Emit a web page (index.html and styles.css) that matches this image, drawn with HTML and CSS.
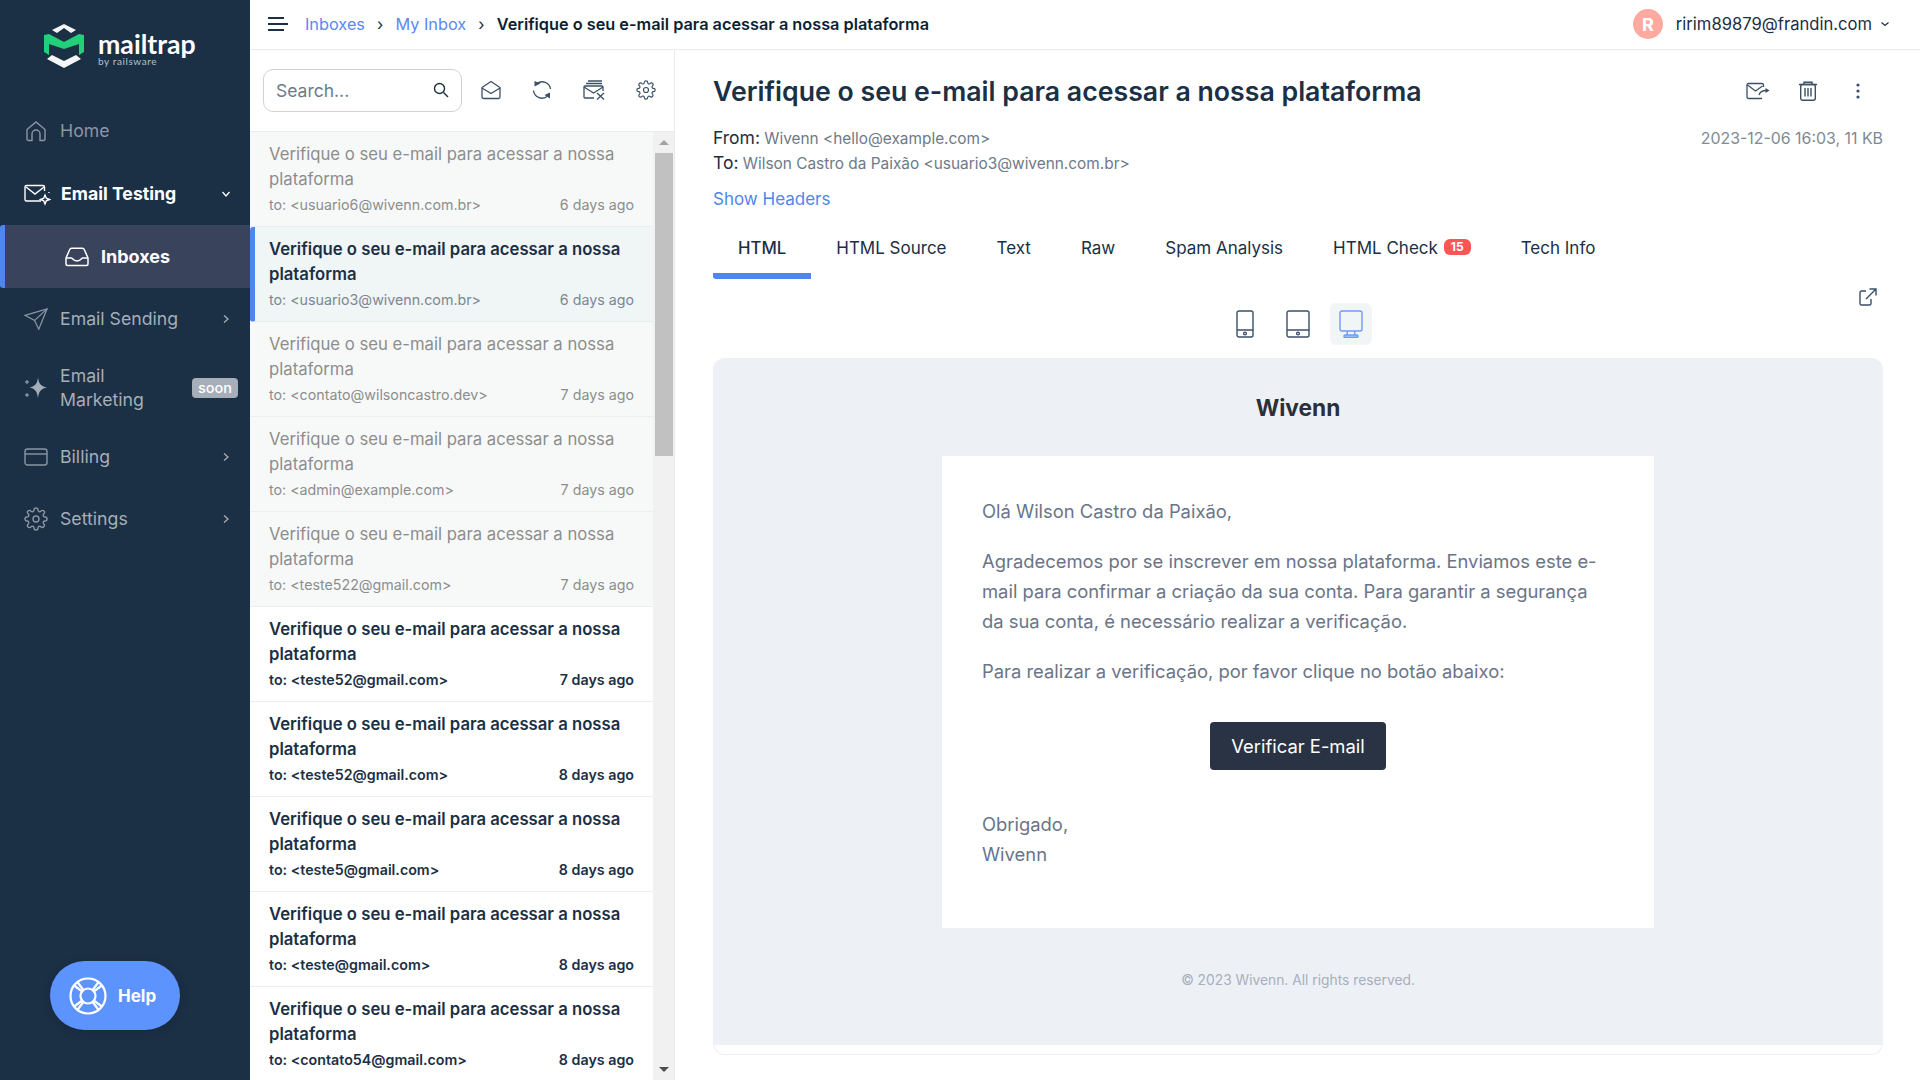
FILE: index.html
```html
<!DOCTYPE html>
<html lang="pt">
<head>
<meta charset="utf-8">
<title>Mailtrap</title>
<link rel="stylesheet" href="styles.css">
</head>
<body>
<div class="app">
  <aside class="sidebar">
    <div class="logo">
      <svg class="logo-mark" width="42" height="46" viewBox="0 0 42 46">
        <path d="M21 1 33 7l-5 3-7-5-7 5-5-3z" fill="#f4f5f6"/>
        <path d="M4 36l5-4 12 6 12-6 5 4-17 9z" fill="#f4f5f6"/>
        <path d="M1 12l5-1 15 8 15-8 5 1v17l-5 3V21l-15 5-15-5v11l-5-3z" fill="#22d07a"/>
      </svg>
      <div class="logo-text">
        <span class="logo-name">mailtrap</span>
        <span class="logo-sub">by railsware</span>
      </div>
    </div>
    <nav class="nav">
      <a class="nav-item home">
        <svg class="nav-icon" width="24" height="24" viewBox="0 0 24 24" fill="none" stroke="#8a96a4" stroke-width="1.400"><path d="M3 10.500 12 3l9 7.500V20a1.500 1.500 0 0 1-1.500 1.500H16V15a4 4 0 0 0-8 0v6.500H4.500A1.500 1.500 0 0 1 3 20z"/></svg>
        <span class="nav-label">Home</span>
      </a>
      <a class="nav-item open">
        <svg class="nav-icon wide" width="28" height="24" viewBox="0 0 28 24" fill="none" stroke="#fff" stroke-width="1.400"><path d="M18 19H3.500A1.500 1.500 0 0 1 2 17.500V5a1.500 1.500 0 0 1 1.500-1.500H20A1.500 1.500 0 0 1 21.500 5v4"/><path d="m3 5 9 7 9-7"/><path d="m22 13 1.300 3.200 3.200 1.300-3.200 1.300L22 22l-1.300-3.200-3.200-1.300 3.200-1.300z"/><path d="M26 10v1"/></svg>
        <span class="nav-label">Email Testing</span>
        <svg class="chev" width="10" height="10" viewBox="0 0 10 10" fill="none" stroke="#fff" stroke-width="1.300"><path d="m1.500 3 3.500 4 3.500-4"/></svg>
      </a>
      <a class="nav-sub">
        <svg width="24" height="20" viewBox="0 0 24 20" fill="none" stroke="#fff" stroke-width="1.500"><path d="M1 11 4.500 3A2.500 2.500 0 0 1 7 1.300h10A2.500 2.500 0 0 1 19.500 3L23 11v6a1.500 1.500 0 0 1-1.500 1.500h-19A1.500 1.500 0 0 1 1 17z"/><path d="M1 11h5.500c1 0 1.500 3 5.500 3s4.500-3 5.500-3H23"/></svg>
        <span>Inboxes</span>
      </a>
      <a class="nav-item">
        <svg class="nav-icon" width="24" height="24" viewBox="0 0 26 24" fill="none" stroke="#8a96a4" stroke-width="1.300"><path d="M1 8 25 1l-9 22-4.500-9.500z"/><path d="M25 1 11.500 13.500"/></svg>
        <span class="nav-label">Email Sending</span>
        <svg class="chev" width="10" height="10" viewBox="0 0 10 10" fill="none" stroke="#a5aeb9" stroke-width="1.300"><path d="m3 1.500 4 3.500-4 3.500"/></svg>
      </a>
      <a class="nav-item tall">
        <svg class="nav-icon" width="24" height="24" viewBox="0 0 24 24" fill="#a5aeb9"><path d="M14 1.500c.8 6 2.500 8.500 9 10-6.500 1.500-8.200 4-9 11-.8-7-2.500-9.500-8.500-11 6-1.500 7.700-4 8.500-10z"/><path d="M3 4v4M1 6h4M3 17v4M1 19h4" stroke="#a5aeb9" stroke-width="1" fill="none"/></svg>
        <span class="nav-label">Email<br>Marketing</span>
        <span class="soon">soon</span>
      </a>
      <a class="nav-item">
        <svg class="nav-icon" width="24" height="20" viewBox="0 0 24 20" fill="none" stroke="#8a96a4" stroke-width="1.400"><rect x="1" y="2" width="22" height="16" rx="2.500"/><path d="M1 7h22"/></svg>
        <span class="nav-label">Billing</span>
        <svg class="chev" width="10" height="10" viewBox="0 0 10 10" fill="none" stroke="#a5aeb9" stroke-width="1.300"><path d="m3 1.500 4 3.500-4 3.500"/></svg>
      </a>
      <a class="nav-item">
        <svg class="nav-icon" width="24" height="24" viewBox="0 0 24 24" fill="none" stroke="#8a96a4" stroke-width="1.400"><circle cx="12" cy="12" r="3"/><path d="M19.400 15a1.700 1.700 0 0 0 .3 1.800l.1.100a2 2 0 1 1-2.900 2.900l-.1-.1a1.700 1.700 0 0 0-2.800 1.200V21a2 2 0 1 1-4 0v-.1a1.700 1.700 0 0 0-2.900-1.200l-.1.100a2 2 0 1 1-2.800-2.800l.1-.1a1.700 1.700 0 0 0-1.200-2.900H3a2 2 0 1 1 0-4h.1a1.700 1.700 0 0 0 1.200-2.900l-.1-.1a2 2 0 1 1 2.800-2.800l.1.100a1.700 1.700 0 0 0 1.900.3 1.700 1.700 0 0 0 1-1.500V3a2 2 0 1 1 4 0v.1a1.700 1.700 0 0 0 2.900 1.200l.1-.1a2 2 0 1 1 2.800 2.800l-.1.100a1.700 1.700 0 0 0 1.200 2.900h.1a2 2 0 1 1 0 4h-.1a1.700 1.700 0 0 0-1.600 1z"/></svg>
        <span class="nav-label">Settings</span>
        <svg class="chev" width="10" height="10" viewBox="0 0 10 10" fill="none" stroke="#a5aeb9" stroke-width="1.300"><path d="m3 1.500 4 3.500-4 3.500"/></svg>
      </a>
    </nav>
    <a class="help">
      <svg width="38" height="38" viewBox="0 0 38 38" fill="none" stroke="#fff" stroke-width="2.200"><circle cx="19" cy="19" r="17.500"/><circle cx="19" cy="19" r="7.500"/><path d="m8 4.500 6 8M4.500 8l8 6M30 4.500l-6 8M33.500 8l-8 6M8 33.500l6-8M4.500 30l8-6M30 33.500l-6-8M33.500 30l-8-6"/></svg>
      <span>Help</span>
    </a>
  </aside>

  <div class="main">
    <header class="topbar">
      <svg class="burger" width="20" height="16" viewBox="0 0 20 16" fill="none" stroke="#1b2f45" stroke-width="2"><path d="M0 2h16M0 8h20M0 14h16"/></svg>
      <nav class="crumbs">
        <a class="crumb">Inboxes</a><span class="sep">›</span>
        <a class="crumb">My Inbox</a><span class="sep">›</span>
        <b class="crumb-now">Verifique o seu e-mail para acessar a nossa plataforma</b>
      </nav>
      <div class="user">
        <span class="avatar">R</span>
        <span class="user-mail">ririm89879@frandin.com</span>
        <svg width="10" height="10" viewBox="0 0 10 10" fill="none" stroke="#1b2f45" stroke-width="1.200"><path d="m1.500 3.500 3.500 3 3.500-3"/></svg>
      </div>
    </header>

    <div class="content">
      <section class="list-col">
        <div class="list-tools">
          <div class="search">
            <span class="search-text">Search...</span>
            <svg width="16" height="16" viewBox="0 0 16 16" fill="none" stroke="#1b2f45" stroke-width="1.400"><circle cx="6.500" cy="6.500" r="5"/><path d="m10.500 10.500 4.500 4.500"/></svg>
          </div>
          <div class="tools">
            <svg width="20" height="20" viewBox="0 0 20 20" fill="none" stroke="#3b5068" stroke-width="1.300"><path d="M1 7.500 10 1.500l9 6V17a1.500 1.500 0 0 1-1.500 1.500h-15A1.500 1.500 0 0 1 1 17z"/><path d="m1 8 9 5.500L19 8"/></svg>
            <svg width="20" height="20" viewBox="0 0 20 20" fill="none" stroke="#3b5068" stroke-width="1.300"><path d="M5 3.500A8.500 8.500 0 0 1 18.500 9"/><path d="M1.500 10.500A8.500 8.500 0 0 0 15 16.500"/><path d="M2.500 1l6 2.500-6 3z" fill="#3b5068" stroke="none"/><path d="M18 18.500 12.500 15l5.500-2.500z" fill="#3b5068" stroke="none"/></svg>
            <svg width="22" height="20" viewBox="0 0 22 20" fill="none" stroke="#3b5068" stroke-width="1.300"><path d="M11 18H2a1 1 0 0 1-1-1V7a1 1 0 0 1 1-1h17a1 1 0 0 1 1 1v4"/><path d="m1 7 9.500 6L20 7"/><path d="M3 3.500h16M5 1h14"/><path d="m14 13 7 6.500M21 13l-7 6.500"/></svg>
            <svg width="20" height="20" viewBox="0 0 24 24" fill="none" stroke="#3b5068" stroke-width="1.400"><circle cx="12" cy="12" r="3"/><path d="M19.400 15a1.700 1.700 0 0 0 .3 1.800l.1.100a2 2 0 1 1-2.900 2.900l-.1-.1a1.700 1.700 0 0 0-2.800 1.200V21a2 2 0 1 1-4 0v-.1a1.700 1.700 0 0 0-2.900-1.200l-.1.100a2 2 0 1 1-2.800-2.800l.1-.1a1.700 1.700 0 0 0-1.200-2.900H3a2 2 0 1 1 0-4h.1a1.700 1.700 0 0 0 1.200-2.900l-.1-.1a2 2 0 1 1 2.800-2.800l.1.100a1.700 1.700 0 0 0 1.900.3 1.700 1.700 0 0 0 1-1.500V3a2 2 0 1 1 4 0v.1a1.700 1.700 0 0 0 2.900 1.200l.1-.1a2 2 0 1 1 2.800 2.800l-.1.100a1.700 1.700 0 0 0 1.200 2.900h.1a2 2 0 1 1 0 4h-.1a1.700 1.700 0 0 0-1.600 1z"/></svg>
          </div>
        </div>
        <div class="list-wrap">
          <ul class="list">
            <li class="row read"><p class="row-title">Verifique o seu e-mail para acessar a nossa plataforma</p><div class="row-meta"><span>to: &lt;usuario6@wivenn.com.br&gt;</span><span>6 days ago</span></div></li>
            <li class="row selected"><p class="row-title">Verifique o seu e-mail para acessar a nossa plataforma</p><div class="row-meta"><span>to: &lt;usuario3@wivenn.com.br&gt;</span><span>6 days ago</span></div></li>
            <li class="row read"><p class="row-title">Verifique o seu e-mail para acessar a nossa plataforma</p><div class="row-meta"><span>to: &lt;contato@wilsoncastro.dev&gt;</span><span>7 days ago</span></div></li>
            <li class="row read"><p class="row-title">Verifique o seu e-mail para acessar a nossa plataforma</p><div class="row-meta"><span>to: &lt;admin@example.com&gt;</span><span>7 days ago</span></div></li>
            <li class="row read"><p class="row-title">Verifique o seu e-mail para acessar a nossa plataforma</p><div class="row-meta"><span>to: &lt;teste522@gmail.com&gt;</span><span>7 days ago</span></div></li>
            <li class="row"><p class="row-title">Verifique o seu e-mail para acessar a nossa plataforma</p><div class="row-meta"><span>to: &lt;teste52@gmail.com&gt;</span><span>7 days ago</span></div></li>
            <li class="row"><p class="row-title">Verifique o seu e-mail para acessar a nossa plataforma</p><div class="row-meta"><span>to: &lt;teste52@gmail.com&gt;</span><span>8 days ago</span></div></li>
            <li class="row"><p class="row-title">Verifique o seu e-mail para acessar a nossa plataforma</p><div class="row-meta"><span>to: &lt;teste5@gmail.com&gt;</span><span>8 days ago</span></div></li>
            <li class="row"><p class="row-title">Verifique o seu e-mail para acessar a nossa plataforma</p><div class="row-meta"><span>to: &lt;teste@gmail.com&gt;</span><span>8 days ago</span></div></li>
            <li class="row"><p class="row-title">Verifique o seu e-mail para acessar a nossa plataforma</p><div class="row-meta"><span>to: &lt;contato54@gmail.com&gt;</span><span>8 days ago</span></div></li>
          </ul>
          <div class="scrollbar">
            <span class="arrow up"></span>
            <div class="track"><div class="thumb"></div></div>
            <span class="arrow down"></span>
          </div>
        </div>
      </section>

      <section class="detail">
        <div class="detail-head">
          <h1 class="subject">Verifique o seu e-mail para acessar a nossa plataforma</h1>
          <div class="head-actions">
            <svg width="24" height="18" viewBox="0 0 24 18" fill="none" stroke="#3b5068" stroke-width="1.300"><path d="M16 16.500H2.500A1.500 1.500 0 0 1 1 15V3a1.500 1.500 0 0 1 1.500-1.500H16A1.500 1.500 0 0 1 17.500 3v2"/><path d="m1.500 3 8 6 7-5"/><path d="M13 13c1-3 3-4.500 7-4.500"/><path d="m19.500 6 4 2.500-4 2.500z" fill="#3b5068" stroke="none"/></svg>
            <svg width="18" height="20" viewBox="0 0 18 20" fill="none" stroke="#3b5068" stroke-width="1.400"><path d="M0 3.500h18M5 3V1.200h8V3"/><rect x="1.700" y="3.500" width="14.600" height="15.800" rx="2"/><path d="M6 7v8.500M9 7v8.500M12 7v8.500"/></svg>
            <svg class="dots" width="4" height="16" viewBox="0 0 4 16" fill="#3b5068"><circle cx="2" cy="2" r="1.600"/><circle cx="2" cy="8" r="1.600"/><circle cx="2" cy="14" r="1.600"/></svg>
          </div>
        </div>
        <div class="addr-wrap">
          <div class="addr">
            <div><span class="addr-key">From:</span> Wivenn &lt;hello@example.com&gt;</div>
            <div><span class="addr-key">To:</span> Wilson Castro da Paixão &lt;usuario3@wivenn.com.br&gt;</div>
          </div>
          <span class="stamp">2023-12-06 16:03, 11 KB</span>
        </div>
        <a class="show-headers">Show Headers</a>
        <div class="tabs">
          <a class="tab active">HTML</a>
          <a class="tab">HTML Source</a>
          <a class="tab">Text</a>
          <a class="tab">Raw</a>
          <a class="tab">Spam Analysis</a>
          <a class="tab">HTML Check <span class="badge">15</span></a>
          <a class="tab">Tech Info</a>
        </div>
        <div class="devices">
          <span class="device"><svg width="18" height="28" viewBox="0 0 18 28" fill="none" stroke="#3b5068" stroke-width="1.400"><rect x="1" y="1" width="16" height="26" rx="2"/><path d="M1 20h16" stroke-width="1.500"/><circle cx="9" cy="23.500" r="1.400"/></svg></span>
          <span class="device"><svg width="24" height="28" viewBox="0 0 24 28" fill="none" stroke="#3b5068" stroke-width="1.400"><rect x="1" y="1" width="22" height="26" rx="2"/><path d="M1 20h22" stroke-width="1.500"/><circle cx="12" cy="23.500" r="1.400"/></svg></span>
          <span class="device current"><svg width="24" height="28" viewBox="0 0 24 28" fill="none" stroke="#6f9bf5" stroke-width="1.400"><rect x="1" y="1" width="22" height="20" rx="2"/><path d="M8.500 21 8 25M15.500 21l.5 4"/><rect x="5" y="25" width="14" height="2.500" rx="1" fill="#a8c3f8"/></svg></span>
          <svg class="external" width="18" height="18" viewBox="0 0 18 18" fill="none" stroke="#3b5068" stroke-width="1.400"><path d="M7 3H2.500A1.500 1.500 0 0 0 1 4.500v11A1.500 1.500 0 0 0 2.500 17h8a1.500 1.500 0 0 0 1.500-1.500V11"/><path d="M7 11 16.500 1.500M10.500 1h6.500v6.500"/></svg>
        </div>
        <div class="preview-frame">
          <div class="preview">
            <h2 class="brand">Wivenn</h2>
            <div class="mail-card">
              <p>Olá Wilson Castro da Paixão,</p>
              <p>Agradecemos por se inscrever em nossa plataforma. Enviamos este e-mail para confirmar a criação da sua conta. Para garantir a segurança da sua conta, é necessário realizar a verificação.</p>
              <p>Para realizar a verificação, por favor clique no botão abaixo:</p>
              <a class="verify">Verificar E-mail</a>
              <p class="thanks">Obrigado,<br>Wivenn</p>
            </div>
            <p class="copyright">© 2023 Wivenn. All rights reserved.</p>
          </div>
        </div>
      </section>
    </div>
  </div>
</div>
</body>
</html>
```

FILE: styles.css
```css
* { box-sizing: border-box; }
html, body { margin: 0; height: 100%; overflow: hidden; }
body { font-family: Inter, "Noto Sans", sans-serif; color: #1b2f45; background: #fff; }
p, h1, h2, ul { margin: 0; padding: 0; }
ul { list-style: none; }

.app { display: flex; height: 1080px; }

/* sidebar */
.sidebar { width: 250px; flex: none; background: #1b2f45; display: flex; flex-direction: column; }
.logo { height: 100px; flex: none; display: flex; align-items: flex-start; gap: 13px; padding: 23px 0 0 43px; }
.logo-text { display: flex; flex-direction: column; padding-top: 10px; }
.logo-name { font-family: Lato, sans-serif; font-size: 26.700px; line-height: 22px; color: #fff; font-weight: 700; }
.logo-sub { font-family: Lato, sans-serif; font-size: 10px; line-height: 12px; color: #b9c0c8; letter-spacing: .6px; }
.nav { display: flex; flex-direction: column; }
.nav-item { height: 62px; display: flex; align-items: center; padding: 0 19px 0 24px; color: #a5aeb9; font-size: 17.700px; line-height: 24px; }
.nav-item.open { height: 63px; color: #fff; font-weight: 700; padding-left: 23px; }
.nav-item.tall { height: 76px; }
.nav-icon { flex: none; margin-right: 12px; }
.nav-icon.wide { margin-right: 10px; }
.nav-label { flex: 1; }
.nav-item.home .nav-label { color: #8a96a4; }
.chev { flex: none; }
.nav-sub { height: 63px; background: #39435b; border-left: 5px solid #4f86ee; border-radius: 3px 0 0 3px; display: flex; align-items: center; gap: 12px; padding-left: 60px; color: #fff; font-weight: 700; font-size: 18px; }
.soon { background: #a5aeb9; color: #fff; font-size: 14.500px; font-weight: 500; line-height: 20px; padding: 0 6px; border-radius: 4px; margin-right: -7px; }
.help { margin: auto 0 50px 50px; width: 130px; height: 69px; border-radius: 35px; background: #5c93fd; box-shadow: 0 2px 10px rgba(0,0,0,.15); display: flex; align-items: center; gap: 11px; padding-left: 19px; color: #fff; font-weight: 700; font-size: 17px; }

/* top bar */
.main { flex: 1; min-width: 0; display: flex; flex-direction: column; }
.topbar { height: 50px; flex: none; border-bottom: 1px solid #e9ebec; display: flex; align-items: center; padding: 0 30px 1px 18px; }
.burger { flex: none; margin-right: 17px; }
.crumbs { display: flex; align-items: center; font-size: 16.300px; flex: 1; }
.crumb { color: #5c88f0; }
.sep { width: 30.500px; text-align: center; color: #1b2f45; }
.crumb-now { font-weight: 600; color: #0d1f33; }
.user { display: flex; align-items: center; }
.avatar { width: 30px; height: 30px; border-radius: 50%; background: #ffaaa1; color: #fff; font-weight: 700; font-size: 18px; display: flex; align-items: center; justify-content: center; margin-right: 13px; }
.user-mail { font-size: 16.600px; color: #1b2f45; margin-right: 8px; }

/* message list */
.content { flex: 1; display: flex; min-height: 0; }
.list-col { width: 425px; flex: none; border-right: 1px solid #e9ebec; display: flex; flex-direction: column; min-height: 0; }
.list-tools { height: 82px; flex: none; display: flex; align-items: center; padding: 0 18px 1px 13px; border-bottom: 1px solid #e9ebec; }
.search { width: 199px; height: 43px; border: 1px solid #cfd2d4; border-radius: 10px; display: flex; align-items: center; justify-content: space-between; padding: 0 12px; flex: none; }
.search-text { font-size: 17.500px; color: #6a7b8d; }
.tools { flex: 1; display: flex; align-items: center; justify-content: space-between; padding-left: 19px; }
.list-wrap { flex: 1; display: flex; min-height: 0; }
.list { flex: 1; min-width: 0; overflow: hidden; }
.row { height: 95px; padding: 10px 19px 9px; border-bottom: 1px solid #e9eef0; background: #fff; }
.row-title { font-size: 16.700px; line-height: 25px; font-weight: 600; color: #1b2f45; }
.row-meta { display: flex; justify-content: space-between; font-size: 14.250px; line-height: 25px; font-weight: 600; color: #1b2f45; }
.row.read { background: #f7f9f9; }
.row.read .row-title, .row.read .row-meta { color: #8d8d8d; font-weight: 400; }
.row.selected { background: #f0f5f6; border-left: 5px solid #4f86ee; padding-left: 14px; border-radius: 3px 0 0 3px; }
.row.selected .row-meta { color: #7c8794; font-weight: 400; }
.scrollbar { width: 21px; flex: none; background: #f1f1f1; display: flex; flex-direction: column; }
.arrow { height: 21px; flex: none; display: flex; align-items: center; justify-content: center; }
.arrow::before { content: ""; border-left: 5px solid transparent; border-right: 5px solid transparent; }
.arrow.up::before { border-bottom: 5px solid #a3a3a3; }
.arrow.down::before { border-top: 5px solid #505050; }
.track { flex: 1; padding: 0 1px 0 2px; }
.thumb { height: 303px; background: #c1c1c1; }

/* message detail */
.detail { flex: 1; min-width: 0; padding: 0 37px 0 38px; display: flex; flex-direction: column; }
.detail-head { display: flex; align-items: center; justify-content: space-between; height: 32px; margin-top: 25px; }
.subject { font-size: 26.700px; line-height: 32px; font-weight: 600; color: #1b2f45; }
.head-actions { display: flex; align-items: center; gap: 29px; padding-right: 23px; }
.dots { margin-left: 10px; }
.addr-wrap { display: flex; justify-content: space-between; margin-top: 19px; }
.addr { font-size: 15.400px; line-height: 24px; color: #6d7a88; }
.addr-key { font-size: 17.500px; color: #1b2f45; }
.stamp { font-size: 15.900px; line-height: 26px; color: #808a94; }
.show-headers { font-size: 17px; line-height: 24px; color: #4f86ee; margin-top: 11px; }
.tabs { display: flex; margin-top: 9px; height: 59px; }
.tab { padding: 16px 25px 0; font-size: 17px; line-height: 24px; color: #1b2f45; display: flex; align-items: flex-start; gap: 6px; border-bottom: 6px solid transparent; }
.tab.active { border-bottom-color: #4f86ee; border-bottom-left-radius: 3px; font-size: 16.800px; font-weight: 500; }
.badge { background: #fb5555; color: #fff; font-size: 12px; font-weight: 700; line-height: 16px; border-radius: 6px; padding: 0 7px; margin-top: 3px; }
.devices { display: flex; justify-content: center; align-items: center; gap: 11px; height: 42px; margin-top: 24px; position: relative; }
.device { width: 42px; height: 42px; display: flex; align-items: center; justify-content: center; border-radius: 6px; }
.device.current { background: #f1f5f6; }
.external { position: absolute; right: 6px; top: -15px; }
.preview-frame { margin-top: 13px; height: 697px; border: 1px solid #edeff1; border-top: 0; border-radius: 12px; }
.preview { height: 687px; background: #edf1f5; border-radius: 12px 12px 0 0; display: flex; flex-direction: column; align-items: center; margin: 0 -1px 0; padding-top: 33px; }
.brand { font-size: 22.700px; line-height: 34px; font-weight: 700; color: #2b2f38; margin-bottom: 31px; }
.mail-card { width: 712px; height: 472px; background: #fff; padding: 40px 40px 0; font-size: 18.400px; line-height: 30px; color: #6b7488; display: flex; flex-direction: column; }
.mail-card p { margin-bottom: 20px; }
.verify { align-self: center; width: 176px; height: 48px; background: #2a3344; color: #fff; border-radius: 4px; display: flex; align-items: center; justify-content: center; margin: 16px 0 39px; font-size: 18.400px; }
.copyright { font-size: 13.800px; line-height: 20px; color: #a8aebe; margin-top: 42px; }
```
